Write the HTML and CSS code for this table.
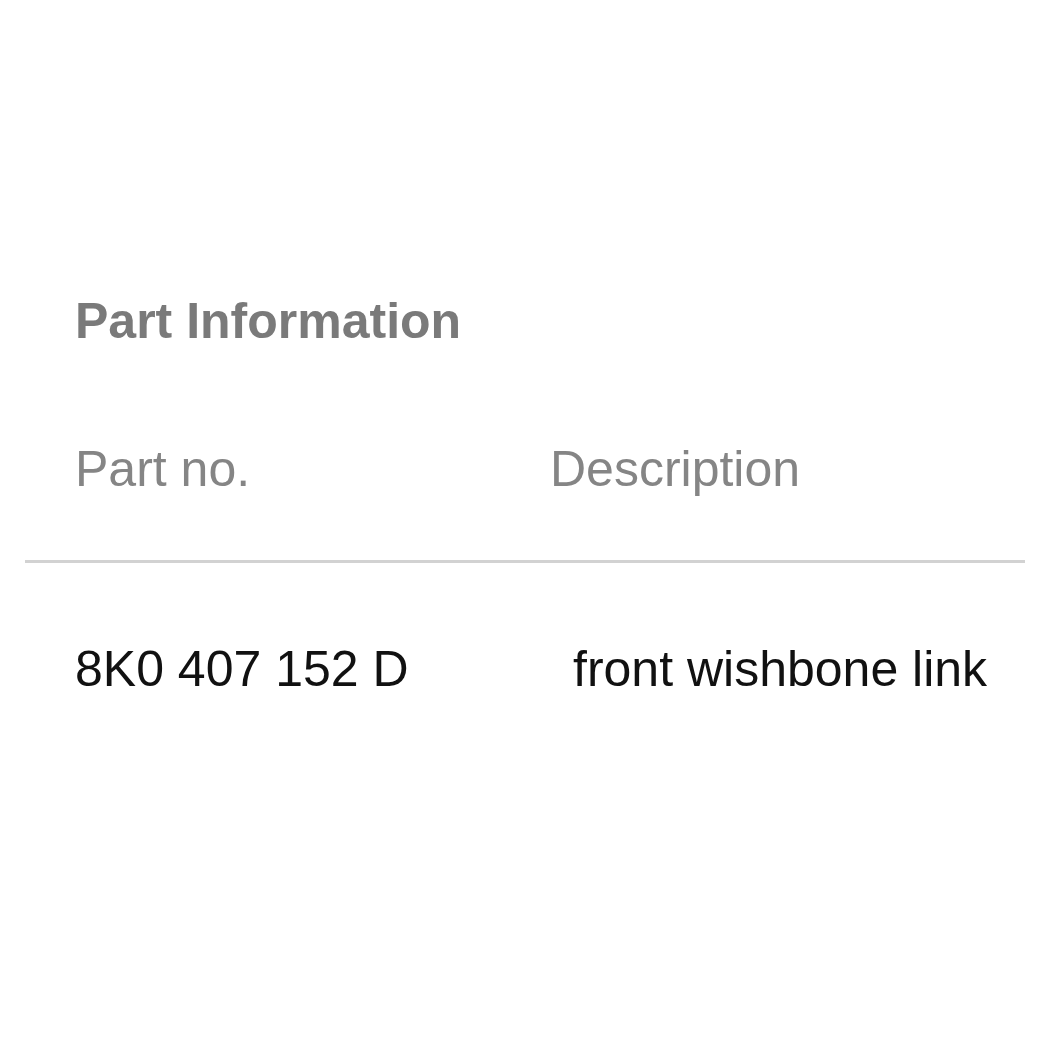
FILE: index.html
```html
<!DOCTYPE html>
<html lang="en">
<head>
<meta charset="utf-8">
<title>Part Information</title>
<link rel="stylesheet" href="styles.css">
</head>
<body>
<section class="panel">
  <h2 class="title">Part Information</h2>
  <div class="table">
    <div class="row head">
      <div class="cell">Part no.</div>
      <div class="cell">Description</div>
    </div>
    <div class="row body">
      <div class="cell">8K0 407 152 D</div>
      <div class="cell desc">front wishbone link</div>
    </div>
  </div>
</section>
</body>
</html>
```
FILE: styles.css
```css
html, body {
  margin: 0;
  padding: 0;
  background: #ffffff;
}
body {
  font-family: "Liberation Sans", Arial, sans-serif;
}
.panel {
  margin: 0 25px;
  padding-top: 291px;
}
.title {
  margin: 0 0 88px 0;
  padding-left: 50px;
  font-size: 50px;
  line-height: 60px;
  font-weight: 700;
  color: #7a7a7a;
}
.row {
  display: grid;
  grid-template-columns: 475px 1fr;
  padding-left: 50px;
  font-size: 50px;
  line-height: 60px;
}
.head {
  color: #858585;
  padding-bottom: 61px;
  border-bottom: 3px solid #d2d2d2;
}
.body {
  color: #111111;
  padding-top: 76px;
}
.desc {
  padding-left: 23px;
}
```
